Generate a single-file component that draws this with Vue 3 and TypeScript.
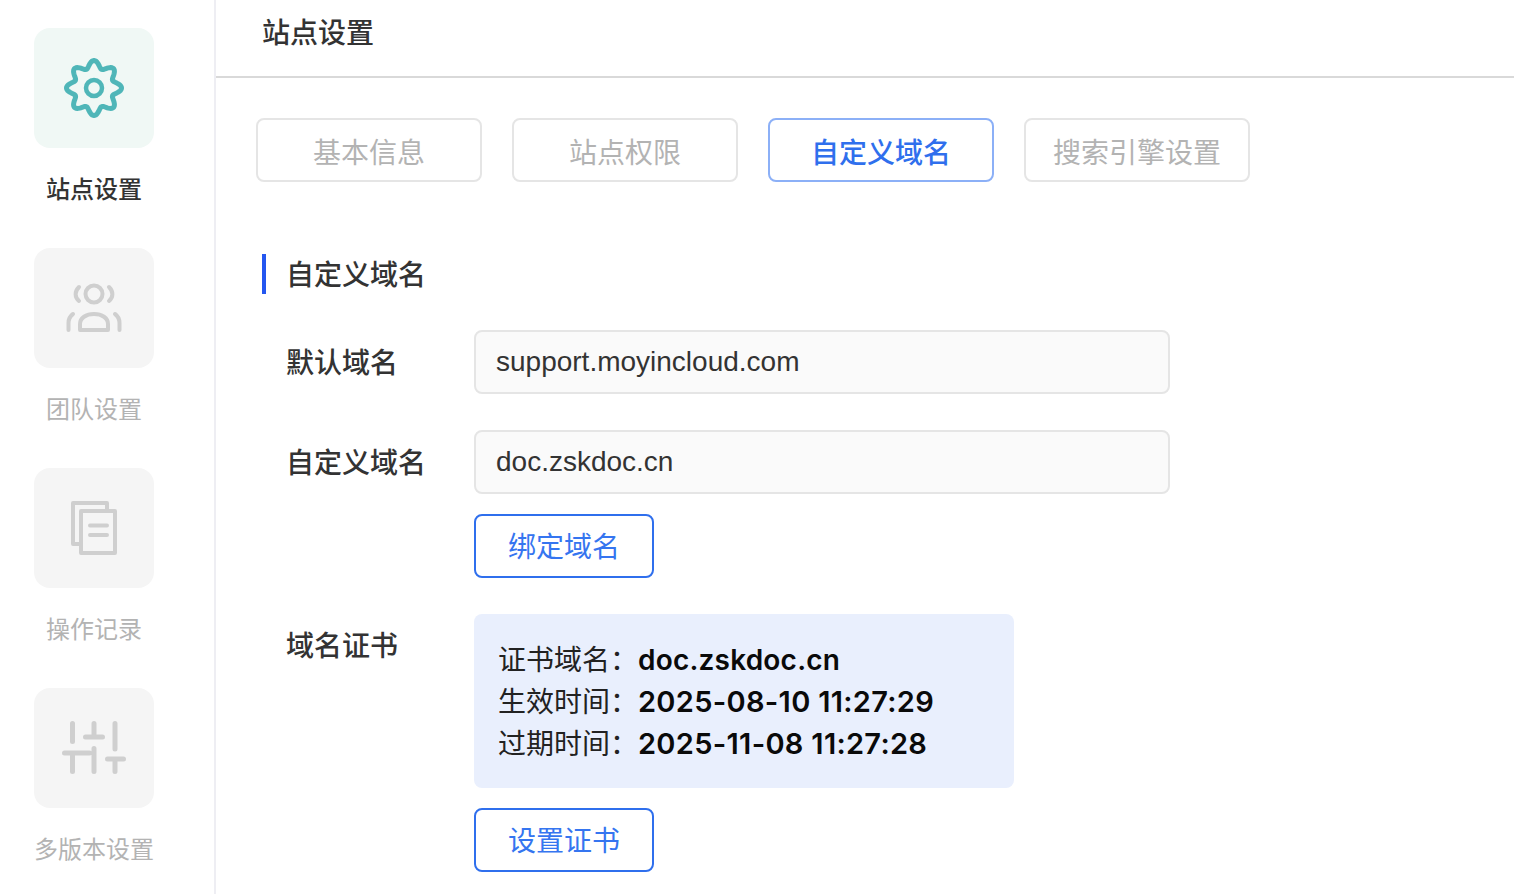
<script setup lang="ts">
const nav = [
  { label: '站点设置', key: 'gear', active: true },
  { label: '团队设置', key: 'team', active: false },
  { label: '操作记录', key: 'log', active: false },
  { label: '多版本设置', key: 'sliders', active: false },
]
const tabs = [
  { label: '基本信息', active: false },
  { label: '站点权限', active: false },
  { label: '自定义域名', active: true },
  { label: '搜索引擎设置', active: false },
]
const cert = [
  { k: '证书域名', v: 'doc.zskdoc.cn', num: false },
  { k: '生效时间', v: '2025-08-10 11:27:29', num: true },
  { k: '过期时间', v: '2025-11-08 11:27:28', num: true },
]
// Eight-lobed gear outline, sampled in polar form around the centre of a 60 box.
const gearPoints = Array.from({ length: 192 }, (_, i) => {
  const a = (i / 192) * Math.PI * 2
  const r = 23.8 + 3.7 * Math.cos(8 * a)
  return `${(30 + r * Math.sin(a)).toFixed(2)},${(30 - r * Math.cos(a)).toFixed(2)}`
}).join(' ')
</script>

<template>
  <div class="page">
    <aside class="side">
      <div v-for="n in nav" :key="n.key" class="nav-item" :class="{ on: n.active }">
        <div class="nav-box">
          <svg v-if="n.key === 'gear'" width="60" height="60" viewBox="0 0 60 60" fill="none" stroke="#4fb6b8" stroke-width="5" stroke-linejoin="round">
            <polygon :points="gearPoints" />
            <circle cx="30" cy="30" r="8" stroke-width="4.5" />
          </svg>
          <svg v-else-if="n.key === 'team'" width="60" height="60" viewBox="0 0 60 60" fill="none" stroke="#cfcfcf" stroke-width="4" stroke-linecap="round" stroke-linejoin="round">
            <circle cx="30" cy="16" r="8.5" />
            <path d="M15 9c-4.500 4.500-4.500 10 0 14M45 9c4.500 4.500 4.500 10 0 14" />
            <path d="M16 52V46c0-6 6-10 14-10s14 4 14 10v6z" />
            <path d="M9 36c-3.500 2.500-4.500 6-4.500 9v7M51 36c3.500 2.500 4.500 6 4.500 9v7" />
          </svg>
          <svg v-else-if="n.key === 'log'" width="60" height="60" viewBox="0 0 60 60" fill="none" stroke="#cfcfcf" stroke-width="4" stroke-linejoin="round">
            <path d="M15 46H9V5h34v8" />
            <path d="M17 13h34v42H17z" />
            <path d="M26 27.500h17M26 37h17" stroke-linecap="round" />
          </svg>
          <svg v-else width="64" height="60" viewBox="0 0 64 60" fill="none" stroke="#cfcfcf" stroke-width="5" stroke-linecap="round">
            <path d="M10.500 5.500v18M32 5.500V19M53 5.500V31M2.500 35h25M10.500 35v18.500M23.500 19h17M32 30.500v23M45.500 41h16M53 41v12.500" />
          </svg>
        </div>
        <div class="nav-label">{{ n.label }}</div>
      </div>
    </aside>
    <main class="main">
      <header class="head">站点设置</header>
      <div class="tabs">
        <div v-for="t in tabs" :key="t.label" class="tab" :class="{ on: t.active }">{{ t.label }}</div>
      </div>
      <h2 class="section">自定义域名</h2>
      <div class="form">
        <div class="row">
          <label class="lab">默认域名</label>
          <div class="field">support.moyincloud.com</div>
        </div>
        <div class="row">
          <label class="lab">自定义域名</label>
          <div class="col">
            <div class="field">doc.zskdoc.cn</div>
            <button class="btn">绑定域名</button>
          </div>
        </div>
        <div class="row">
          <label class="lab lab-cert">域名证书</label>
          <div class="col">
            <div class="cert">
              <div v-for="c in cert" :key="c.k" class="cert-line">
                <span class="cert-k">{{ c.k }}：</span><b class="cert-v" :class="{ num: c.num }">{{ c.v }}</b>
              </div>
            </div>
            <button class="btn">设置证书</button>
          </div>
        </div>
      </div>
    </main>
  </div>
</template>

<style>
html, body { margin: 0; overflow: hidden; background: #fff; }
</style>

<style scoped>
.page {
  display: flex;
  height: 894px;
  overflow: hidden;
  font-family: Inter, "Noto Sans CJK SC", sans-serif;
  color: #333;
}
.side {
  width: 180px;
  flex: none;
  border-right: 2px solid #eeeef3;
  padding: 28px 0 0 34px;
  display: flex;
  flex-direction: column;
}
.nav-item { width: 120px; height: 220px; flex: none; display: flex; flex-direction: column; align-items: center; color: #b3b3b3; }
.nav-box {
  width: 120px; height: 120px; border-radius: 16px; background: #f5f5f5;
  display: flex; align-items: center; justify-content: center; flex: none;
}
.nav-item.on .nav-box { background: #f0f8f5; }
.nav-label { margin-top: 24px; font-size: 24px; line-height: 35px; white-space: nowrap; }
.nav-item.on .nav-label { color: #333; font-weight: 500; }
.main { flex: 1; min-width: 0; }
.head {
  height: 76px; border-bottom: 2px solid #d9d9d9; padding-left: 46px;
  font-size: 28px; font-weight: 500; line-height: 66px; color: #333;
}
.tabs { display: flex; gap: 30px; padding: 40px 0 0 40px; }
.tab {
  width: 226px; height: 64px; box-sizing: border-box; border: 2px solid #e5e5e5; border-radius: 8px; padding-top: 2px;
  display: flex; align-items: center; justify-content: center; font-size: 28px; color: #b3b3b3;
}
.tab.on { border-color: #8cb0f7; color: #2f6fed; font-weight: 500; }
.section {
  margin: 72px 0 0 46px; height: 40px; border-left: 4px solid #2456f0; padding-left: 20px;
  font-size: 28px; font-weight: 500; line-height: 42px; color: #333;
}
.form { padding: 36px 0 0 70px; display: flex; flex-direction: column; }
.row { display: flex; margin-bottom: 36px; }
.lab { width: 188px; height: 64px; flex: none; font-size: 28px; font-weight: 500; line-height: 66px; color: #333; }
.lab-cert { line-height: 64px; }
.col { display: flex; flex-direction: column; gap: 20px; align-items: flex-start; }
.field {
  width: 696px; height: 64px; box-sizing: border-box; border: 2px solid #e5e5e5; border-radius: 8px;
  background: #fafafa; padding: 0 20px; font-family: "Liberation Sans", sans-serif; font-size: 28px; line-height: 60px; color: #333;
}
.btn {
  width: 180px; height: 64px; box-sizing: border-box; border: 2px solid #2f6fed; border-radius: 8px;
  background: #fff; color: #3575f0; font: inherit; font-size: 28px; padding: 0 0 2px;
}
.cert {
  width: 540px; height: 174px; box-sizing: border-box; background: #e9effd; border-radius: 8px;
  padding: 25px 24px; font-size: 28px; line-height: 42px; color: #222;
}
.cert-line { display: flex; white-space: nowrap; }
.cert-k { width: 140px; flex: none; }
.cert-v { font-weight: 600; color: #0a0a0a; letter-spacing: .2px; }
.cert-v.num { font-size: 29px; letter-spacing: .3px; }
</style>
